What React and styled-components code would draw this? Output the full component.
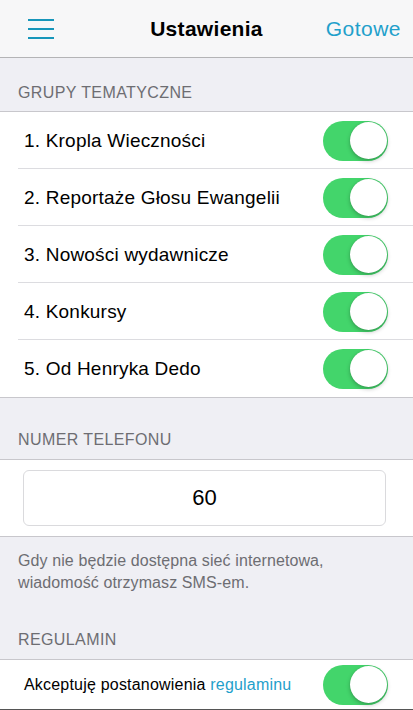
import React from "react";
import styled, { createGlobalStyle } from "styled-components";

const Global = createGlobalStyle`
  html, body { margin: 0; padding: 0; background: #efeff4; }
  body { font-family: "Liberation Sans", Arial, sans-serif; -webkit-font-smoothing: antialiased; }
  * { box-sizing: border-box; }
`;

const Page = styled.div`
  width: 413px;
  height: 710px;
  overflow: hidden;
  display: flex;
  flex-direction: column;
  background: #efeff4;
`;

const NavBar = styled.header`
  height: 58px;
  flex: none;
  background: #f7f7f8;
  border-bottom: 1px solid #b4b4b6;
  display: grid;
  grid-template-columns: 1fr auto 1fr;
  align-items: center;
  padding: 0 12px;
`;

const Burger = styled.button`
  justify-self: start;
  margin-left: 16px;
  background: none;
  border: 0;
  padding: 0;
  width: 26px;
  height: 20px;
  display: flex;
  flex-direction: column;
  justify-content: space-between;
  cursor: pointer;
  & > span {
    display: block;
    height: 2px;
    background: #1796ba;
  }
`;

const Title = styled.h1`
  margin: 0;
  font-size: 21px;
  font-weight: 700;
  letter-spacing: 0.3px;
  color: #000;
`;

const Done = styled.button`
  justify-self: end;
  background: none;
  border: 0;
  padding: 0;
  font-family: inherit;
  font-size: 21px;
  letter-spacing: 0.5px;
  color: #1fa0cb;
`;

const SectionHeader = styled.div`
  height: ${(p) => p.$h}px;
  display: flex;
  align-items: flex-end;
  padding: 0 18px ${(p) => p.$pb}px;
  font-size: 16px;
  letter-spacing: 0.4px;
  line-height: 18px;
  color: #6d6d72;
  text-transform: uppercase;
  flex: none;
`;

const Group = styled.section`
  background: #fff;
  border-top: 1px solid #c8c7cc;
  border-bottom: ${(p) => (p.$open ? "0" : "1px solid #c8c7cc")};
  flex: none;
`;

const Row = styled.div`
  height: ${(p) => p.$h || 57}px;
  display: flex;
  align-items: center;
  justify-content: space-between;
  padding: 0 25px 0 24px;
  position: relative;
  &:not(:last-child)::after {
    content: "";
    position: absolute;
    left: 18px;
    right: 0;
    bottom: 0;
    height: 1px;
    background: #dcdce0;
  }
`;

const Label = styled.span`
  font-size: ${(p) => p.$size || 19}px;
  letter-spacing: 0.2px;
  color: #000;
`;

const Link = styled.span`
  color: #1fa0cb;
`;

const Switch = styled.span`
  width: 65px;
  height: 40px;
  border-radius: 20px;
  background: #43d56b;
  position: relative;
  flex: none;
  &::after {
    content: "";
    position: absolute;
    top: 1.5px;
    right: 1.5px;
    width: 37px;
    height: 37px;
    border-radius: 50%;
    background: #fff;
    box-shadow: 0 2px 4px rgba(0, 0, 0, 0.25), 0 0 1px rgba(0, 0, 0, 0.2);
  }
`;

const InputCell = styled.div`
  padding: 10px 27px 10px 23px;
`;

const Input = styled.input`
  width: 100%;
  height: 56px;
  border: 1px solid #dadadd;
  border-radius: 6px;
  text-align: center;
  font-family: inherit;
  font-size: 22px;
  color: #000;
  outline: none;
  background: #fff;
`;

const Footer = styled.p`
  margin: 0;
  padding: 13px 18px 0;
  font-size: 16px;
  letter-spacing: 0.1px;
  line-height: 22px;
  color: #6d6d72;
  height: 84px;
  flex: none;
`;

const BottomEdge = styled.div`
  flex: 1;
  background: #fff;
  border-top: 2px solid #555;
`;

const groups = [
  "1. Kropla Wieczności",
  "2. Reportaże Głosu Ewangelii",
  "3. Nowości wydawnicze",
  "4. Konkursy",
  "5. Od Henryka Dedo",
];

export default function App() {
  return (
    <Page>
      <Global />
      <NavBar>
        <Burger aria-label="menu">
          <span />
          <span />
          <span />
        </Burger>
        <Title>Ustawienia</Title>
        <Done>Gotowe</Done>
      </NavBar>

      <SectionHeader $h={53} $pb={9}>Grupy tematyczne</SectionHeader>
      <Group>
        {groups.map((g) => (
          <Row key={g}>
            <Label>{g}</Label>
            <Switch />
          </Row>
        ))}
      </Group>

      <SectionHeader $h={61} $pb={10}>Numer telefonu</SectionHeader>
      <Group>
        <InputCell>
          <Input defaultValue="60" />
        </InputCell>
      </Group>
      <Footer>
        Gdy nie będzie dostępna sieć internetowa,
        <br />
        wiadomość otrzymasz SMS-em.
      </Footer>

      <SectionHeader $h={38} $pb={10}>Regulamin</SectionHeader>
      <Group $open>
        <Row $h={49}>
          <Label $size={16}>
            Akceptuję postanowienia <Link>regulaminu</Link>
          </Label>
          <Switch />
        </Row>
      </Group>
      <BottomEdge />
    </Page>
  );
}
